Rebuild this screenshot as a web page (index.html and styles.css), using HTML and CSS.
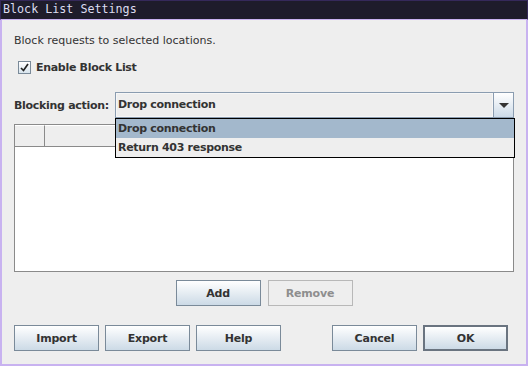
FILE: index.html
```html
<!DOCTYPE html>
<html lang="en">
<head>
  <meta charset="UTF-8">
  <title>Block List Settings</title>
  <link rel="stylesheet" href="styles.css">
</head>
<body>
  <div class="window">
    <div class="title-bar">Block List Settings</div>

    <div class="content">
      <p class="intro">Block requests to selected locations.</p>

      <label class="check-row">
        <span class="check-box">
          <svg width="9" height="9" viewBox="0 0 9 9"><path d="M1 5 L3.5 7.5 L8 1" fill="none" stroke="#222" stroke-width="1.7"/></svg>
        </span>
        Enable Block List
      </label>

      <div class="action-row">
        <span class="action-label">Blocking action:</span>
        <div class="combo">
          <div class="combo-field">Drop connection</div>
          <div class="combo-arrow"><span class="triangle"></span></div>
        </div>
      </div>

      <div class="table-area">
        <div class="table-head">
          <div class="head-cell first"></div>
          <div class="head-cell"></div>
        </div>
        <div class="table-body"></div>

        <!-- popup of the combo box, drawn over the table -->
        <ul class="combo-popup">
          <li class="selected">Drop connection</li>
          <li>Return 403 response</li>
        </ul>
      </div>

      <div class="list-buttons">
        <button class="btn">Add</button>
        <button class="btn disabled">Remove</button>
      </div>

      <div class="dialog-buttons">
        <div class="group">
          <button class="btn">Import</button>
          <button class="btn">Export</button>
          <button class="btn">Help</button>
        </div>
        <div class="group">
          <button class="btn">Cancel</button>
          <button class="btn default">OK</button>
        </div>
      </div>
    </div>
  </div>
</body>
</html>
```

FILE: styles.css
```css
body {
  margin: 0;
  background: #c8b2f0;
  font-family: "DejaVu Sans", sans-serif;
  font-size: 11px;
  color: #333333;
}

.window {
  width: 528px;
  height: 366px;
  box-sizing: border-box;
  border: 2px solid #c8b2f0;
  border-top: 0;
  background: #eeeeee;
  display: flex;
  flex-direction: column;
}

.title-bar {
  height: 20px;
  margin: 0 -2px;
  box-sizing: border-box;
  border: 1px solid #35295a;
  border-bottom: 1px solid #c8b2f0;
  background: #1e1c2b;
  color: #dcdcf0;
  font-family: "DejaVu Sans Mono", monospace;
  font-size: 11.7px;
  line-height: 17px;
  padding-left: 2px;
}

.content {
  flex: 1;
  padding: 0 12px;
  display: flex;
  flex-direction: column;
}

.intro {
  margin: 13px 0 0;
  line-height: 16px;
}

.check-row {
  margin-top: 10px;
  height: 16px;
  display: flex;
  align-items: center;
  gap: 5px;
  padding-left: 4px;
  font-weight: bold;
  letter-spacing: -0.3px;
}

.check-box {
  width: 11px;
  height: 11px;
  border: 1px solid #7a8a99;
  background: linear-gradient(#ffffff, #d8e4ee);
  display: flex;
  align-items: center;
  justify-content: center;
}

.action-row {
  margin-top: 17px;
  height: 26px;
  display: flex;
  align-items: center;
}

.action-label {
  width: 101px;
  font-weight: bold;
  letter-spacing: -0.3px;
}

.combo {
  flex: 1;
  height: 26px;
  box-sizing: border-box;
  display: flex;
  border: 1px solid #8a9cb0;
}

.combo-field {
  flex: 1;
  border: 1px solid #f6f6f6;
  padding-left: 1px;
  line-height: 22px;
  font-weight: bold;
  letter-spacing: -0.3px;
}

.combo-arrow {
  width: 19px;
  border-left: 1px solid #8a9cb0;
  background: linear-gradient(#ffffff, #cddbe8);
  display: flex;
  align-items: center;
  justify-content: center;
}

.triangle {
  width: 0;
  height: 0;
  border-left: 5px solid transparent;
  border-right: 5px solid transparent;
  border-top: 5px solid #333333;
  margin-top: 1px;
}

.table-area {
  position: relative;
  margin-top: 6px;
  height: 148px;
  box-sizing: border-box;
  border: 1px solid #8a8a8a;
  background: #ffffff;
  display: flex;
  flex-direction: column;
}

.table-head {
  height: 21px;
  display: flex;
  background: #eeeeee;
  border-bottom: 1px solid #8a8a8a;
}

.head-cell {
  flex: 1;
  border-top: 1px solid #ffffff;
}

.head-cell.first {
  flex: 0 0 29px;
  border-right: 1px solid #8a8a8a;
}

.combo-popup {
  position: absolute;
  top: -7px;
  left: 100px;
  right: -2px;
  margin: 0;
  padding: 0;
  list-style: none;
  border: 1px solid #000000;
  background: #eeeeee;
}

.combo-popup li {
  height: 19px;
  line-height: 19px;
  padding-left: 2px;
  font-weight: bold;
  letter-spacing: -0.3px;
}

.combo-popup li.selected {
  background: #a3b8cc;
}

.list-buttons {
  margin-top: 8px;
  display: flex;
  justify-content: center;
  gap: 7px;
}

.dialog-buttons {
  margin-top: 19px;
  display: flex;
  justify-content: space-between;
  padding-right: 6px;
}

.group {
  display: flex;
  gap: 6px;
}

.btn {
  width: 85px;
  height: 26px;
  border: 1px solid #7a8a99;
  background: linear-gradient(#ffffff, #ccdae6);
  font-family: "DejaVu Sans", sans-serif;
  font-size: 11px;
  font-weight: bold;
  letter-spacing: -0.2px;
  color: #333333;
  padding: 0;
}

.btn.disabled {
  background: #eeeeee;
  border-color: #b8b8b8;
  color: #8e8e8e;
}

.btn.default {
  border: 2px solid #6a7480;
}
```
